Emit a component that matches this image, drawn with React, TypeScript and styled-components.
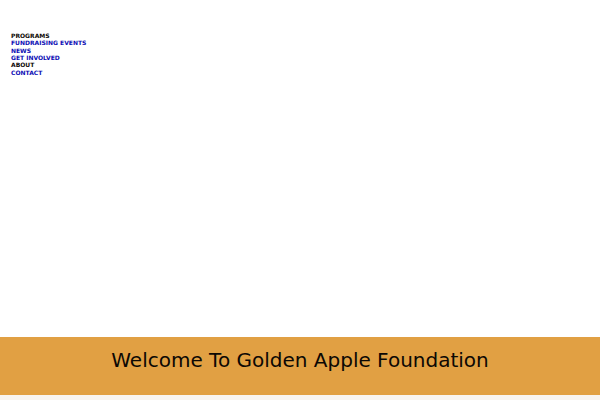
import React from "react";
import styled, { createGlobalStyle } from "styled-components";

const GlobalStyle = createGlobalStyle`
  html, body, #root { height: 100%; }
  body {
    margin: 0;
    background: #f8f4f0;
    color: #0c0804;
    font-family: "DejaVu Sans", sans-serif;
  }
`;

const Page = styled.div`
  display: flex;
  flex-direction: column;
  min-height: 100%;
  box-sizing: border-box;
  padding-bottom: 5px;
`;

const Header = styled.header`
  flex: 1;
  padding: 32px 11px 0;
  background: #fff;
`;

const MenuList = styled.ul`
  display: grid;
  grid-auto-rows: 1fr;
  min-height: 44px;
  margin: 0;
  padding: 0;
  list-style: none;
`;

const MenuItem = styled.li`
  display: flex;
  font-size: 6px;
  line-height: 7px;
  font-weight: 700;
  text-transform: uppercase;
`;

const MenuLink = styled.a`
  color: #0c0cb4;
  text-decoration: none;
`;

const Banner = styled.section`
  padding: 8px 16px 20px;
  background: #e1a043;
  text-align: center;
`;

const Title = styled.h1`
  margin: 0;
  font-size: 20px;
  line-height: 30px;
  font-weight: 400;
`;

const menu: { label: string; href?: string }[] = [
  { label: "Programs" },
  { label: "Fundraising Events", href: "#events" },
  { label: "News", href: "#news" },
  { label: "Get Involved", href: "#get-involved" },
  { label: "About" },
  { label: "Contact", href: "#contact" },
];

export default function App() {
  return (
    <Page>
      <GlobalStyle />
      <Header>
        <nav aria-label="Main">
          <MenuList>
            {menu.map(({ label, href }) => (
              <MenuItem key={label}>
                {href ? <MenuLink href={href}>{label}</MenuLink> : label}
              </MenuItem>
            ))}
          </MenuList>
        </nav>
      </Header>
      <Banner>
        <Title>Welcome To Golden Apple Foundation</Title>
      </Banner>
    </Page>
  );
}
